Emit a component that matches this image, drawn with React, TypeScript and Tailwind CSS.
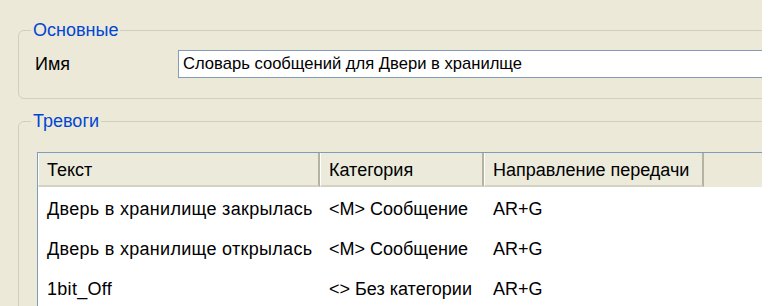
import React from "react";

type Row = { text: string; category: string; direction: string };

const rows: Row[] = [
  { text: "Дверь в хранилище закрылась", category: "<M> Сообщение", direction: "AR+G" },
  { text: "Дверь в хранилище открылась", category: "<M> Сообщение", direction: "AR+G" },
  { text: "1bit_Off", category: "<> Без категории", direction: "AR+G" },
];

const font = { fontFamily: '"Liberation Sans", Arial, sans-serif' };

function HeaderCell({ label, width }: { label: string; width: string }) {
  return (
    <div
      className={`${width} shrink-0 h-full flex items-center pl-[8px] pt-[3px] bg-[#EBEADB] border-b-2 border-b-[#D6D2C2] border-r-2 border-r-[#B5B2A4] border-l border-l-white`}
    >
      {label}
    </div>
  );
}

export default function App() {
  return (
    <div className="w-[771px] h-[306px] flex bg-white overflow-hidden text-[18px] text-black" style={font}>
      <div className="w-[762px] shrink-0 h-full bg-[#ECE9D8] overflow-hidden pl-[18px] pt-[19px]">
        {/* Основные */}
        <fieldset className="w-[800px] border border-[#D0D0BF] rounded-[6px] pl-[12px] pb-[20px]">
          <legend className="px-[2px] leading-[22px] text-[#0046D5]">Основные</legend>
          <div className="flex items-center mt-[9px]">
            <span className="w-[147px] pl-[4px] shrink-0">Имя</span>
            <div className="flex-1 h-[28px] bg-white border border-[#7F9DB9] flex items-center pl-[4px] text-[16.6px]">
              Словарь сообщений для Двери в хранилще
            </div>
          </div>
        </fieldset>

        {/* Тревоги */}
        <fieldset className="w-[800px] h-[300px] mt-[11px] border border-[#D0D0BF] rounded-[6px] pl-[18px]">
          <legend className="ml-[-6px] px-[2px] leading-[22px] text-[#0046D5]">Тревоги</legend>
          <div className="mt-[20px] border-l border-t border-[#7F9DB9] bg-white h-[200px]">
            <div className="flex h-[34px] bg-[#ECE9D8]">
              <HeaderCell label="Текст" width="w-[282px]" />
              <HeaderCell label="Категория" width="w-[164px]" />
              <HeaderCell label="Направление передачи" width="w-[220px]" />
              <div className="flex-1" />
            </div>
            {rows.map((r) => (
              <div key={r.text} className="flex h-[40px] items-center pt-[4px]">
                <div className="w-[282px] shrink-0 pl-[9px] whitespace-nowrap tracking-[0.3px]">{r.text}</div>
                <div className="w-[164px] shrink-0 pl-[9px] whitespace-nowrap">{r.category}</div>
                <div className="w-[220px] shrink-0 pl-[9px] whitespace-nowrap">{r.direction}</div>
              </div>
            ))}
          </div>
        </fieldset>
      </div>
    </div>
  );
}
